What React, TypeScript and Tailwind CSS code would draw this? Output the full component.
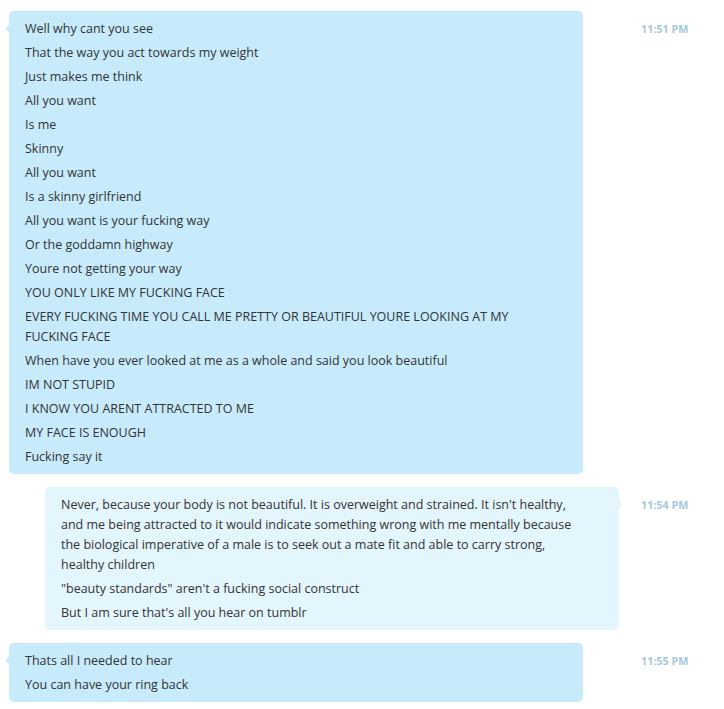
import React from "react";

type Side = "left" | "right";

const groups: { side: Side; time: string; msgs: string[] }[] = [
  {
    side: "left",
    time: "11:51 PM",
    msgs: [
      "Well why cant you see",
      "That the way you act towards my weight",
      "Just makes me think",
      "All you want",
      "Is me",
      "Skinny",
      "All you want",
      "Is a skinny girlfriend",
      "All you want is your fucking way",
      "Or the goddamn highway",
      "Youre not getting your way",
      "YOU ONLY LIKE MY FUCKING FACE",
      "EVERY FUCKING TIME YOU CALL ME PRETTY OR BEAUTIFUL YOURE LOOKING AT MY FUCKING FACE",
      "When have you ever looked at me as a whole and said you look beautiful",
      "IM NOT STUPID",
      "I KNOW YOU ARENT ATTRACTED TO ME",
      "MY FACE IS ENOUGH",
      "Fucking say it",
    ],
  },
  {
    side: "right",
    time: "11:54 PM",
    msgs: [
      "Never, because your body is not beautiful. It is overweight and strained. It isn't healthy, and me being attracted to it would indicate something wrong with me mentally because the biological imperative of a male is to seek out a mate fit and able to carry strong, healthy children",
      "\"beauty standards\" aren't a fucking social construct",
      "But I am sure that's all you hear on tumblr",
    ],
  },
  {
    side: "left",
    time: "11:55 PM",
    msgs: ["Thats all I needed to hear", "You can have your ring back"],
  },
];

function Notch({ side, color }: { side: Side; color: string }) {
  return side === "left" ? (
    <svg
      className="absolute left-[-4px] top-[13px]"
      width="5"
      height="9"
      viewBox="0 0 5 9"
    >
      <path d="M5 0 L1 3.6 Q0 4.5 1 5.4 L5 9 Z" fill={color} />
    </svg>
  ) : (
    <svg
      className="absolute right-[-4px] top-[13px]"
      width="5"
      height="9"
      viewBox="0 0 5 9"
    >
      <path d="M0 0 L4 3.6 Q5 4.5 4 5.4 L0 9 Z" fill={color} />
    </svg>
  );
}

export default function App() {
  return (
    <div
      className="w-[724px] h-[709px] bg-white pt-[11px] flex flex-col gap-[13px] overflow-hidden text-[#333333]"
      style={{ fontFamily: "'Open Sans', 'Noto Sans', sans-serif" }}
    >
      {groups.map((g, i) => {
        const color = g.side === "left" ? "#c7ebfb" : "#e3f5fd";
        return (
          <div key={i} className="flex items-start">
            <div className="w-[641px] shrink-0">
              <div
                className={
                  g.side === "left"
                    ? "relative ml-[9px] w-[574px] rounded-[5px] bg-[#c7ebfb] pl-4 pr-[38px] pt-[5px] pb-[6px]"
                    : "relative ml-[45px] w-[574px] rounded-[5px] bg-[#e3f5fd] pl-4 pr-[38px] pt-[5px] pb-[6px]"
                }
              >
                <Notch side={g.side} color={color} />
                {g.msgs.map((m, j) => (
                  <div key={j} className="pt-[3px] pb-[1px] text-[12.5px] leading-[20px]">
                    {m}
                  </div>
                ))}
              </div>
            </div>
            <div className="pt-[8px] text-[10.75px] leading-[20px] font-bold text-[#a6c8da]">
              {g.time}
            </div>
          </div>
        );
      })}
    </div>
  );
}
